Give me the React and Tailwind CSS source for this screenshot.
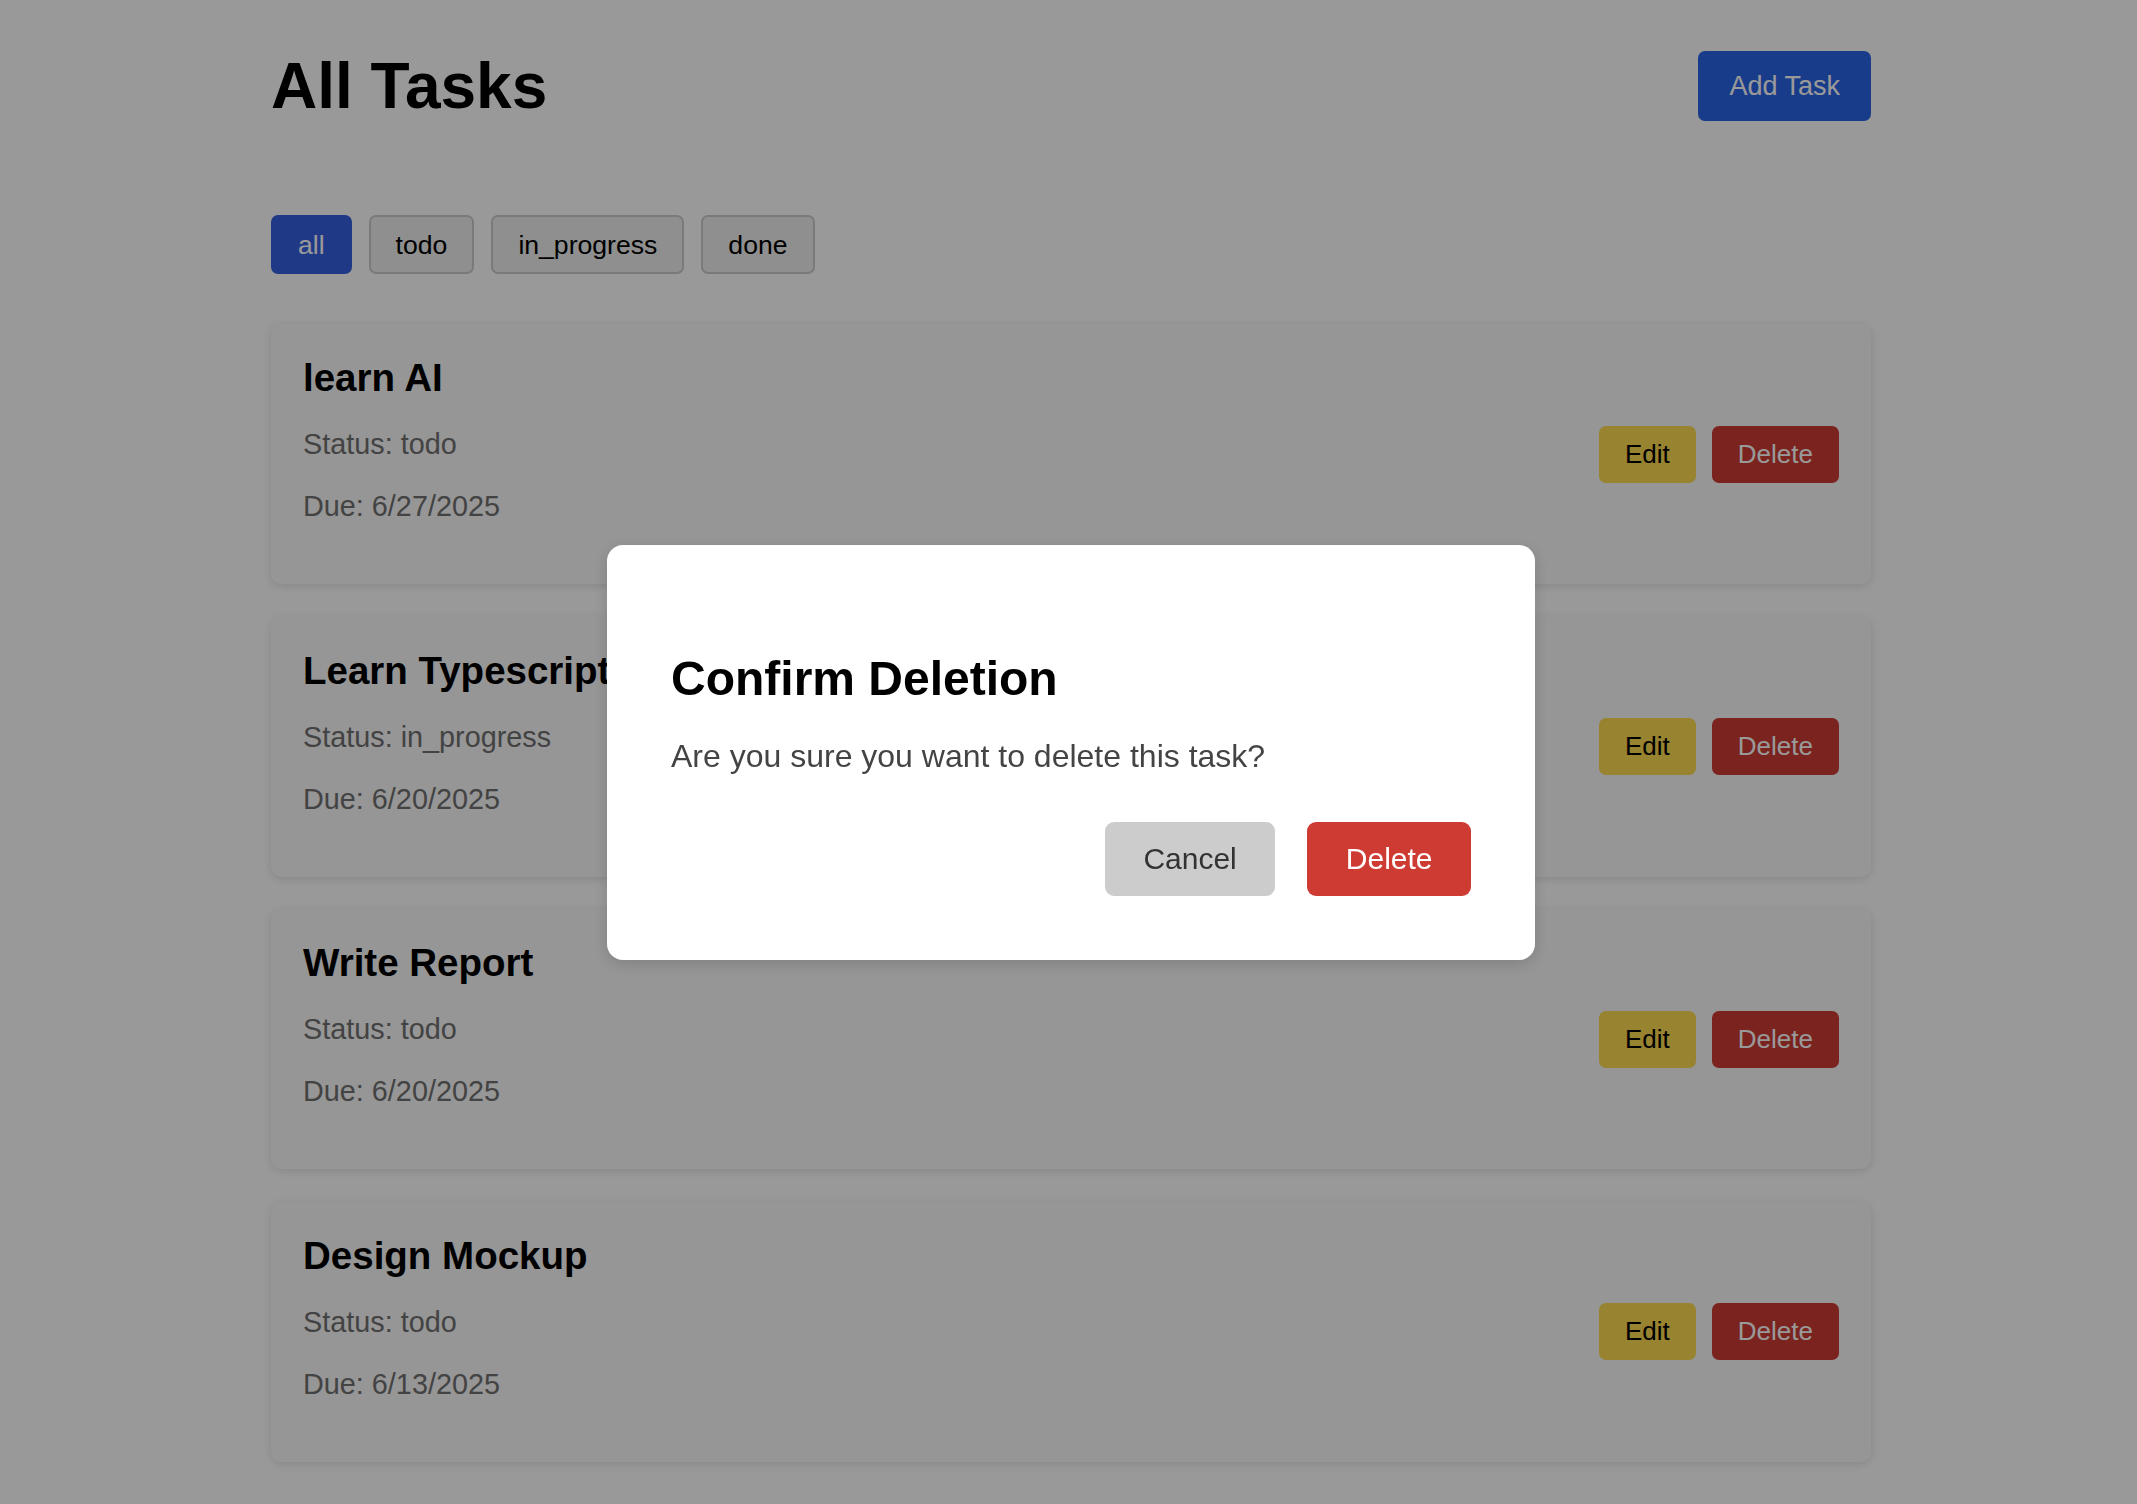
import React, { useState } from "react";

const tasks = [
  { id: 1, title: "learn AI", status: "todo", due: "6/27/2025" },
  { id: 2, title: "Learn Typescript", status: "in_progress", due: "6/20/2025" },
  { id: 3, title: "Write Report", status: "todo", due: "6/20/2025" },
  { id: 4, title: "Design Mockup", status: "todo", due: "6/13/2025" },
];

const filters = ["all", "todo", "in_progress", "done"];

const TaskCard = ({ task, onDelete }) => (
  <div className="flex items-center justify-between h-[260px] rounded-[10px] bg-[#fafafa] shadow-[0_2px_8px_rgba(0,0,0,0.12)] pl-[32px] pr-[32px]">
    <div className="flex flex-col pt-[32px] pb-[61px]">
      <h3 className="text-[38.5px] leading-[44px] font-bold text-black">{task.title}</h3>
      <p className="mt-[28px] text-[28.8px] leading-[33px] text-[#707070]">Status: {task.status}</p>
      <p className="mt-[29px] text-[28.8px] leading-[33px] text-[#707070]">Due: {task.due}</p>
    </div>
    <div className="flex gap-[16px]">
      <button className="bg-[#fcda50] text-black text-[26px] leading-[31px] px-[26px] py-[13px] rounded-[7px]">
        Edit
      </button>
      <button
        className="bg-[#cd3b33] text-white text-[26px] leading-[31px] px-[26px] py-[13px] rounded-[7px]"
        onClick={() => onDelete(task.id)}
      >
        Delete
      </button>
    </div>
  </div>
);

export default function App() {
  const [filter, setFilter] = useState("all");
  const [confirmId, setConfirmId] = useState(1);

  const shown = filter === "all" ? tasks : tasks.filter((t) => t.status === filter);

  return (
    <div className="min-h-screen bg-white font-['Liberation_Sans',Arial,sans-serif]">
      <div className="pl-[271px] pr-[266px] pt-[49px] pb-[44px]">
        {/* header */}
        <div className="flex items-center justify-between">
          <h1 className="text-[64px] leading-[74px] font-bold text-black">All Tasks</h1>
          <button className="bg-[#2a64e6] text-white text-[27px] leading-[30px] px-[31px] py-[20px] rounded-[7px]">
            Add Task
          </button>
        </div>

        {/* filters */}
        <div className="flex gap-[17px] mt-[92px]">
          {filters.map((f) => (
            <button
              key={f}
              onClick={() => setFilter(f)}
              className={
                f === filter
                  ? "border-2 border-[#3660e2] bg-[#3660e2] text-white text-[26.6px] leading-[30px] px-[25px] py-[12.5px] rounded-[7px]"
                  : "border-2 border-[#cccccc] bg-[#eeeeee] text-black text-[26.6px] leading-[30px] px-[25px] py-[12.5px] rounded-[7px]"
              }
            >
              {f}
            </button>
          ))}
        </div>

        {/* list */}
        <div className="flex flex-col gap-[32.5px] mt-[50px]">
          {shown.map((t) => (
            <TaskCard key={t.id} task={t} onDelete={setConfirmId} />
          ))}
        </div>
      </div>

      {/* confirm dialog */}
      {confirmId && (
        <div className="fixed inset-0 bg-black/40 flex items-center justify-center pl-[5px]">
          <div className="w-[928px] bg-white rounded-[16px] shadow-[0_4px_16px_rgba(0,0,0,0.15)] px-[64px] pt-[107px] pb-[64px]">
            <h2 className="text-[48px] leading-[54px] font-bold text-black">Confirm Deletion</h2>
            <p className="mt-[32px] text-[32px] leading-[37px] text-[#444444]">
              Are you sure you want to delete this task?
            </p>
            <div className="flex justify-end gap-[32px] mt-[47px]">
              <button
                className="bg-[#cccccc] text-[#333333] text-[30px] leading-[34px] px-[38.5px] py-[20px] rounded-[9px]"
                onClick={() => setConfirmId(null)}
              >
                Cancel
              </button>
              <button
                className="bg-[#cd3b33] text-white text-[30px] leading-[34px] px-[38.5px] py-[20px] rounded-[9px]"
                onClick={() => setConfirmId(null)}
              >
                Delete
              </button>
            </div>
          </div>
        </div>
      )}
    </div>
  );
}
